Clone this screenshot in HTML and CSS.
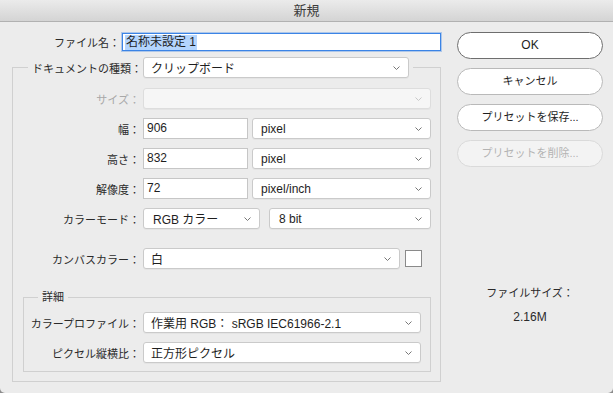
FILE: index.html
```html
<!DOCTYPE html>
<html lang="ja">
  <head>
    <meta charset="UTF-8" />
    <meta name="viewport" content="width=device-width, initial-scale=1.0" />
    <title>新規</title>
    <link rel="stylesheet" href="styles.css">
  </head>
  <body>
    <div class="window">
      <div class="titlebar">新規</div>

      <div class="dialog">
        <div class="main">
          <div class="name-row">
            <span class="name-label">ファイル名：</span>
            <div class="name-input"><span class="selected">名称未設定 1</span></div>
          </div>

          <fieldset class="group">
            <legend class="group-head">
              <span class="head-label">ドキュメントの種類：</span>
              <div class="select doc-type">
                <span>クリップボード</span>
                <svg class="chevron" width="7" height="4" viewBox="0 0 7 4"><polyline points="0.5,0.5 3.5,3.5 6.5,0.5" /></svg>
              </div>
            </legend>

            <div class="row">
              <span class="label disabled">サイズ：</span>
              <div class="select full off">
                <span></span>
                <svg class="chevron" width="7" height="4" viewBox="0 0 7 4"><polyline points="0.5,0.5 3.5,3.5 6.5,0.5" /></svg>
              </div>
            </div>

            <div class="row">
              <span class="label">幅：</span>
              <div class="field">906</div>
              <div class="select unit">
                <span>pixel</span>
                <svg class="chevron" width="7" height="4" viewBox="0 0 7 4"><polyline points="0.5,0.5 3.5,3.5 6.5,0.5" /></svg>
              </div>
            </div>

            <div class="row">
              <span class="label">高さ：</span>
              <div class="field">832</div>
              <div class="select unit">
                <span>pixel</span>
                <svg class="chevron" width="7" height="4" viewBox="0 0 7 4"><polyline points="0.5,0.5 3.5,3.5 6.5,0.5" /></svg>
              </div>
            </div>

            <div class="row">
              <span class="label">解像度：</span>
              <div class="field">72</div>
              <div class="select unit">
                <span>pixel/inch</span>
                <svg class="chevron" width="7" height="4" viewBox="0 0 7 4"><polyline points="0.5,0.5 3.5,3.5 6.5,0.5" /></svg>
              </div>
            </div>

            <div class="row mode-row">
              <span class="label">カラーモード：</span>
              <div class="select mode">
                <span>RGB カラー</span>
                <svg class="chevron" width="7" height="4" viewBox="0 0 7 4"><polyline points="0.5,0.5 3.5,3.5 6.5,0.5" /></svg>
              </div>
              <div class="select depth">
                <span>8 bit</span>
                <svg class="chevron" width="7" height="4" viewBox="0 0 7 4"><polyline points="0.5,0.5 3.5,3.5 6.5,0.5" /></svg>
              </div>
            </div>

            <div class="row">
              <span class="label">カンバスカラー：</span>
              <div class="select canvas">
                <span>白</span>
                <svg class="chevron" width="7" height="4" viewBox="0 0 7 4"><polyline points="0.5,0.5 3.5,3.5 6.5,0.5" /></svg>
              </div>
              <div class="swatch"></div>
            </div>

            <fieldset class="details">
              <legend class="details-head">詳細</legend>

              <div class="row">
                <span class="label short">カラープロファイル：</span>
                <div class="select full">
                  <span>作業用 RGB： sRGB IEC61966-2.1</span>
                  <svg class="chevron" width="7" height="4" viewBox="0 0 7 4"><polyline points="0.5,0.5 3.5,3.5 6.5,0.5" /></svg>
                </div>
              </div>

              <div class="row">
                <span class="label short">ピクセル縦横比：</span>
                <div class="select full">
                  <span>正方形ピクセル</span>
                  <svg class="chevron" width="7" height="4" viewBox="0 0 7 4"><polyline points="0.5,0.5 3.5,3.5 6.5,0.5" /></svg>
                </div>
              </div>
            </fieldset>
          </fieldset>
        </div>

        <div class="side">
          <div class="btn default">OK</div>
          <div class="btn">キャンセル</div>
          <div class="btn">プリセットを保存...</div>
          <div class="btn off">プリセットを削除...</div>

          <div class="file-size">
            <div class="size-label">ファイルサイズ：</div>
            <div class="size-value">2.16M</div>
          </div>
        </div>
      </div>
    </div>
  </body>
</html>
```

FILE: styles.css
```css
* {
  box-sizing: border-box;
}
body {
  margin: 0;
  background-color: #8c8c8c;
  font-family: "Liberation Sans", "Noto Sans CJK JP", sans-serif;
  font-size: 12px;
  color: #1e1e1e;
}
.window {
  width: 613px;
  height: 393px;
  background-color: #ececec;
  border-radius: 0 0 5px 5px;
  overflow: hidden;
}
.titlebar {
  height: 22px;
  line-height: 21px;
  text-align: center;
  font-size: 13px;
  color: #3b3b3b;
  background: linear-gradient(#ebebeb, #d4d4d4);
  border-bottom: 1px solid #b1b1b1;
}
.dialog {
  display: flex;
  gap: 16px;
  padding: 10px 10px 0 12px;
}
.main {
  width: 429px;
}

/* Dateiname */
.name-row {
  display: flex;
  align-items: center;
  gap: 2px;
  height: 18px;
  margin-top: 1px;
  margin-bottom: 6px;
}
.name-label {
  width: 108px;
  text-align: right;
  font-size: 11px;
  color: #2a2a2a;
}
.name-input {
  flex: 1;
  height: 18px;
  background-color: #fff;
  border: 1px solid #3b84e6;
  box-shadow: 0 0 0 1px rgba(59, 132, 230, 0.35);
  padding-left: 2px;
  display: flex;
  align-items: center;
}
.selected {
  background-color: #b4d5fe;
  line-height: 15px;
  padding: 0 1px;
}

/* Gruppen */
.group {
  margin: 0;
  padding: 10px 9px 9px 0;
  border: 1px solid #d0d0d0;
}
.group-head {
  display: flex;
  align-items: center;
  gap: 1px;
  margin-left: 15px;
  padding: 0 4px;
}
.head-label {
  font-size: 11px;
  color: #2a2a2a;
}
.details {
  margin: 20px 0 0 10px;
  padding: 7px 9px 8px 0;
  border: 1px solid #d0d0d0;
}
.details-head {
  margin-left: 14px;
  padding: 0 4px;
  font-size: 11px;
  line-height: 16px;
  color: #2a2a2a;
}

/* Zeilen */
.row {
  display: flex;
  align-items: center;
  height: 21px;
  margin-bottom: 9px;
}
.row:last-child {
  margin-bottom: 0;
}
.mode-row {
  margin-bottom: 19px;
}
.label {
  width: 127px;
  margin-right: 3px;
  text-align: right;
  font-size: 11px;
  color: #2a2a2a;
}
.label.short {
  width: 116px;
}
.label.disabled {
  color: #a8a8a8;
}

/* Eingaben */
.field {
  width: 105px;
  height: 21px;
  margin-right: 4px;
  padding-left: 3px;
  line-height: 19px;
  background-color: #fff;
  border: 1px solid #c6c6c6;
}
.select {
  height: 21px;
  display: flex;
  align-items: center;
  justify-content: space-between;
  padding: 0 8px 0 7px;
  background-color: #fff;
  border: 1px solid #cacaca;
  border-radius: 3px;
  box-shadow: 0 1px 0 rgba(0, 0, 0, 0.03);
}
.select span {
  white-space: nowrap;
}
.chevron {
  fill: none;
  stroke: #777;
  stroke-width: 1;
}
.select.off {
  background-color: #f6f6f6;
  border-color: #dddddd;
}
.select.off .chevron {
  stroke: #c8c8c8;
}
.doc-type {
  width: 266px;
}
.full {
  flex: 1;
}
.unit {
  flex: 1;
  padding-left: 8px;
}
.mode {
  width: 117px;
  margin-right: 9px;
  padding-left: 9px;
}
.depth {
  flex: 1;
  padding-left: 9px;
}
.canvas {
  width: 257px;
  margin-right: 5px;
}
.swatch {
  width: 17px;
  height: 17px;
  background-color: #fff;
  border: 1px solid #8a8a8a;
}

/* Buttons */
.side {
  width: 146px;
  display: flex;
  flex-direction: column;
}
.btn {
  height: 27px;
  margin-bottom: 9px;
  line-height: 25px;
  text-align: center;
  font-size: 11px;
  color: #1e1e1e;
  background-color: #fff;
  border: 1px solid #b9b9b9;
  border-radius: 14px;
}
.btn.default {
  font-size: 12px;
  border-color: #6e6e6e;
}
.btn.off {
  color: #b3b3b3;
  background-color: #f3f3f3;
  border-color: #dadada;
}
.file-size {
  margin-top: 109px;
  text-align: center;
  color: #2a2a2a;
}
.size-label {
  font-size: 11px;
  line-height: 16px;
}
.size-value {
  margin-top: 8px;
  line-height: 16px;
}
```
